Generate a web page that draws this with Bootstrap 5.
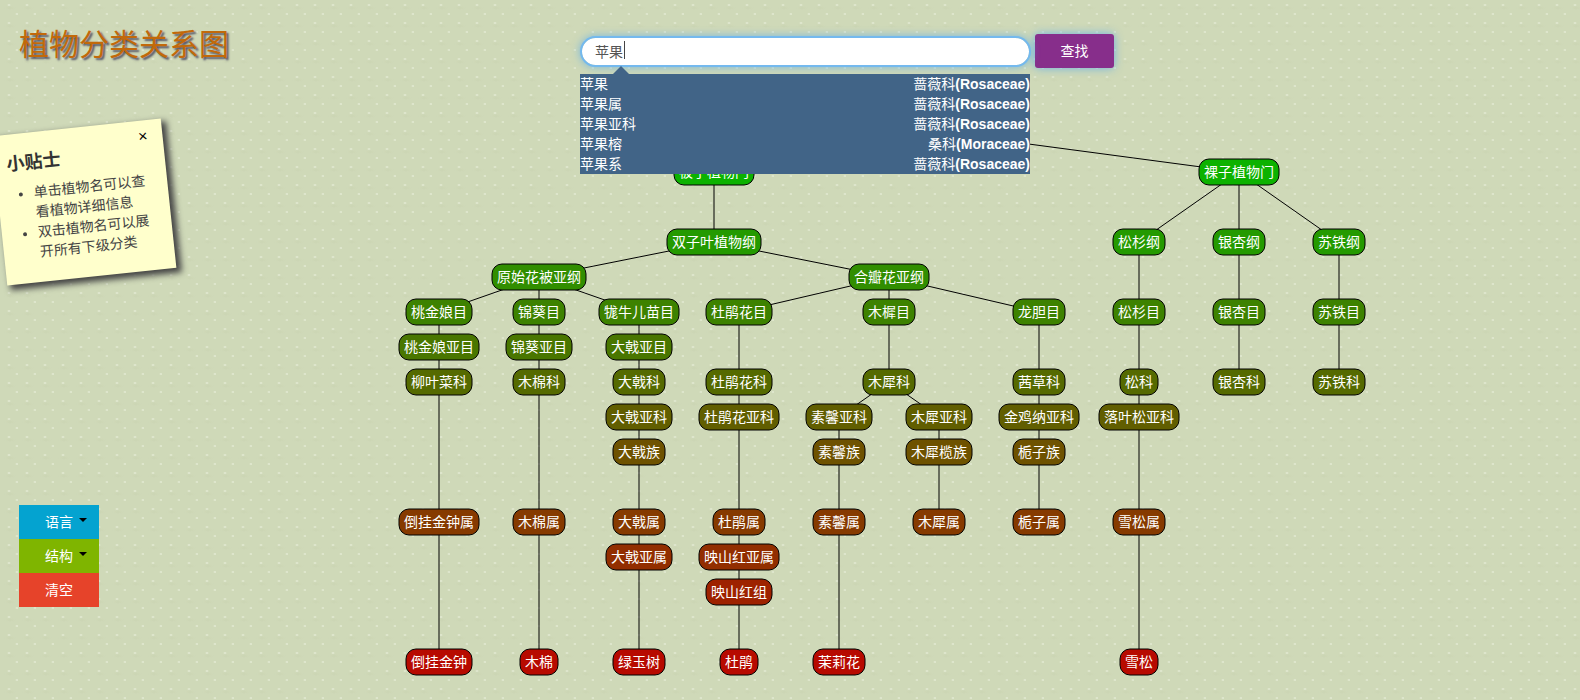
<!DOCTYPE html>
<html lang="zh-CN">
<head>
<meta charset="utf-8">
<meta name="viewport" content="width=device-width, initial-scale=1">
<title>植物分类关系图</title>
<link rel="stylesheet" href="https://cdn.jsdelivr.net/npm/bootstrap@5.3.0/dist/css/bootstrap.min.css">
<style>
body{
  font-family:"Liberation Sans","Noto Sans CJK SC",sans-serif;font-size:14px;line-height:20px;color:#333;
  background-color:#cfd9b8;
  background-image:
    radial-gradient(ellipse 2px 1px at 9px 5px,#eff3e4,transparent),
    radial-gradient(ellipse 2px 1px at 17px 14px,#eff3e4,transparent),
    radial-gradient(ellipse 6px 2px at 10px 8px,#ccd5b4,transparent);
  background-size:18px 18px;
}
.masthead{height:110px}
.masthead-title{width:calc(50% - 210px);padding-left:19px}
.masthead-title h1{font-size:30px;line-height:40px;color:#c2690a;text-shadow:2px 2px 2px #556;padding-top:25px}
.search-box{width:451px}
.search-box input{height:31px;margin-top:36px;padding:0 13px 2px;font-size:14px;color:#555;border:2px solid #74b9ee;border-radius:16px;box-shadow:0 0 8px rgba(82,168,236,.7)}
.search-box input:focus{color:#555;border-color:#74b9ee;box-shadow:0 0 8px rgba(82,168,236,.7)}
.text-caret{left:44px;top:41px;width:1px;height:18px;background:#444}
.suggest{top:74px;left:0;width:450px;background:#416487;z-index:5}
.suggest::before{content:"";position:absolute;top:-8px;left:33px;border:8px solid transparent;border-top:0;border-bottom-color:#416487}
.suggest a{color:#fff;height:20px}
.btn-search{margin:34px 0 0 4px;width:79px;height:34px;padding:0;font-size:14px;color:#fff;background:#872e8b;border:0;border-radius:3px;box-shadow:0 0 10px rgba(82,168,236,.8)}
.btn-search:hover{color:#fff;background:#75247a}
.side{width:calc(50% - 401px)}
.tips{width:170px;height:150px;margin:17px 0 0 -1px;background:#ffc;box-shadow:4px 4px 6px 1px #444;transform:rotate(-6deg)}
.tips h2{font-size:18px;line-height:20px;padding:20px 0 0 12px;margin-bottom:10px}
.tips ul{padding-left:36px;padding-right:20px;color:#444}
.tips button{top:6px;right:15px;font-size:16px;line-height:20px;color:#000;background:none}
.menu{width:80px;margin:auto 0 93px 19px}
.menu button{height:34px;color:#fff;border:0;padding:0}
.menu button.dropdown-toggle::after{position:absolute;left:60px;top:13px;margin:0;color:#000;border-width:4px 4px 0}
.m-lang{background:#04a3d0}.m-tree{background:#7fb500}.m-clear{background:#e6432a}
.tree rect,.tree line{stroke:#000}
.tree text{fill:#fff;font-size:14px;text-anchor:middle;cursor:pointer}
</style>
</head>
<body class="min-vh-100 overflow-hidden">
<header class="masthead d-flex">
  <div class="masthead-title"><h1 class="fw-normal m-0">植物分类关系图</h1></div>
  <form class="d-flex align-items-start" onsubmit="return false">
    <div class="search-box position-relative">
      <input class="form-control" type="text" value="苹果" aria-label="植物名" autocomplete="off">
      <span class="text-caret position-absolute"></span>
      <div class="suggest position-absolute">
        <a href="#" class="d-flex justify-content-between text-decoration-none"><span>苹果</span><span>蔷薇科<b>(Rosaceae)</b></span></a>
        <a href="#" class="d-flex justify-content-between text-decoration-none"><span>苹果属</span><span>蔷薇科<b>(Rosaceae)</b></span></a>
        <a href="#" class="d-flex justify-content-between text-decoration-none"><span>苹果亚科</span><span>蔷薇科<b>(Rosaceae)</b></span></a>
        <a href="#" class="d-flex justify-content-between text-decoration-none"><span>苹果榕</span><span>桑科<b>(Moraceae)</b></span></a>
        <a href="#" class="d-flex justify-content-between text-decoration-none"><span>苹果系</span><span>蔷薇科<b>(Rosaceae)</b></span></a>
      </div>
    </div>
    <button class="btn btn-search" type="submit">查找</button>
  </form>
</header>
<main class="d-flex">
  <aside class="side d-flex flex-column flex-shrink-0">
    <section class="tips position-relative">
      <button type="button" class="position-absolute border-0 p-0" aria-label="关闭">×</button>
      <h2 class="fw-bold">小贴士</h2>
      <ul class="m-0"><li>单击植物名可以查看植物详细信息</li><li>双击植物名可以展开所有下级分类</li></ul>
    </section>
    <nav class="menu d-flex flex-column">
      <button type="button" class="m-lang position-relative dropdown-toggle">语言</button>
      <button type="button" class="m-tree position-relative dropdown-toggle">结构</button>
      <button type="button" class="m-clear">清空</button>
    </nav>
  </aside>
  <svg class="tree flex-shrink-0" width="1000" height="590" id="tree" role="img" aria-label="植物分类树"></svg>
</main>
<script src="https://cdn.jsdelivr.net/npm/bootstrap@5.3.0/dist/js/bootstrap.bundle.min.js"></script>
<script>
// [name, column x, rank, children]; ranks are 35px apart
const chain = (x, ...items) => items.reduceRight((kids, [name, rank]) => [[name, x, rank, kids]], []);
const root = ['', 587, 1, [
  ['被子植物门', 325, 2, [
    ['双子叶植物纲', 325, 4, [
      ['原始花被亚纲', 150, 5, [
        ...chain(50, ['桃金娘目',6], ['桃金娘亚目',7], ['柳叶菜科',8], ['倒挂金钟属',12], ['倒挂金钟',16]),
        ...chain(150, ['锦葵目',6], ['锦葵亚目',7], ['木棉科',8], ['木棉属',12], ['木棉',16]),
        ...chain(250, ['牻牛儿苗目',6], ['大戟亚目',7], ['大戟科',8], ['大戟亚科',9], ['大戟族',10], ['大戟属',12], ['大戟亚属',13], ['绿玉树',16])
      ]],
      ['合瓣花亚纲', 500, 5, [
        ...chain(350, ['杜鹃花目',6], ['杜鹃花科',8], ['杜鹃花亚科',9], ['杜鹃属',12], ['映山红亚属',13], ['映山红组',14], ['杜鹃',16]),
        ['木樨目', 500, 6, [['木犀科', 500, 8, [
          ...chain(450, ['素馨亚科',9], ['素馨族',10], ['素馨属',12], ['茉莉花',16]),
          ...chain(550, ['木犀亚科',9], ['木犀榄族',10], ['木犀属',12])
        ]]]],
        ...chain(650, ['龙胆目',6], ['茜草科',8], ['金鸡纳亚科',9], ['栀子族',10], ['栀子属',12])
      ]]
    ]]
  ]],
  ['裸子植物门', 850, 2, [
    ...chain(750, ['松杉纲',4], ['松杉目',6], ['松科',8], ['落叶松亚科',9], ['雪松属',12], ['雪松',16]),
    ...chain(850, ['银杏纲',4], ['银杏目',6], ['银杏科',8]),
    ...chain(950, ['苏铁纲',4], ['苏铁目',6], ['苏铁科',8])
  ]]
]];
let lines = '', nodes = '';
const yOf = rank => rank * 35 - 8;
function draw([name, x, rank, kids]) {
  const y = yOf(rank);
  for (const k of kids) {
    lines += `<line x1="${x}" y1="${y}" x2="${k[1]}" y2="${yOf(k[2])}"/>`;
    draw(k);
  }
  if (!name) return;
  const w = name.length * 14 + 10, t = rank - 2;
  nodes += `<rect x="${x - w / 2}" y="${y - 13}" width="${w}" height="26" rx="10" fill="rgb(${Math.round(12 + t * 12.2)},${Math.round(178 - t * 12)},0)"/>` +
    `<text x="${x}" y="${y + 5}">${name}</text>`;
}
draw(root);
document.getElementById('tree').innerHTML = lines + nodes;
</script>
</body>
</html>
